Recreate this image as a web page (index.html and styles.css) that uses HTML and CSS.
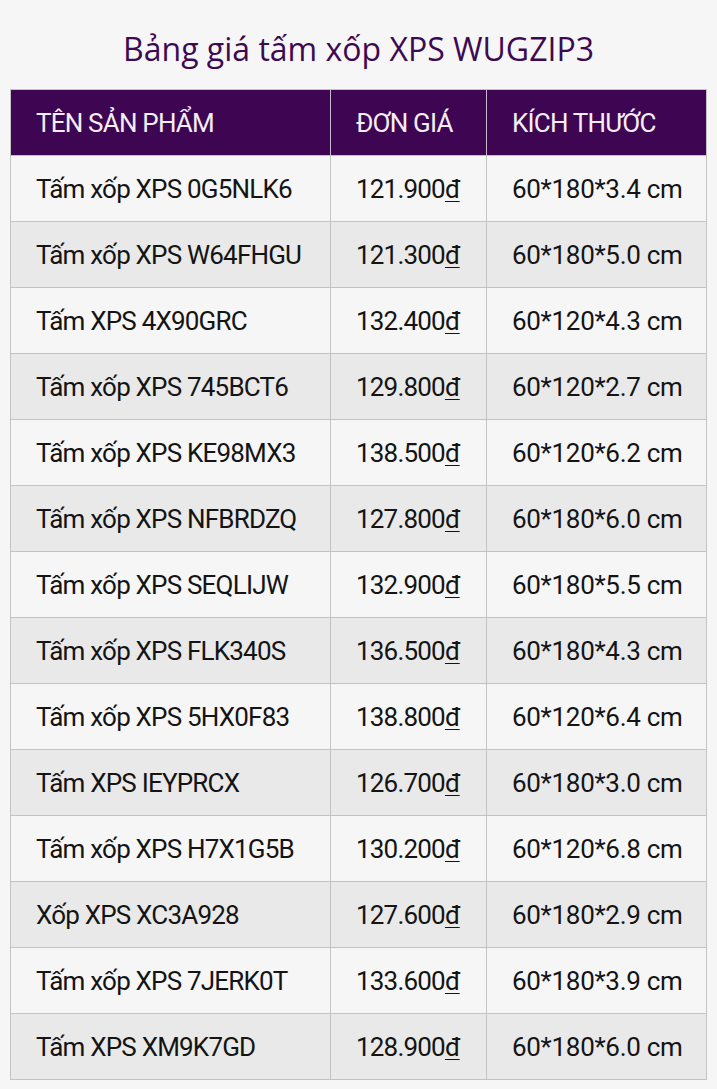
FILE: index.html
```html
<!DOCTYPE html>
<html lang="vi">
<head>
<meta charset="utf-8">
<title>Bảng giá tấm xốp XPS WUGZIP3</title>
<link rel="stylesheet" href="styles.css">
</head>
<body>
<div class="page">
  <h1 class="title">Bảng giá tấm xốp XPS WUGZIP3</h1>
  <table class="price-table">
    <thead>
      <tr><th class="c1">TÊN SẢN PHẨM</th><th class="c2">ĐƠN GIÁ</th><th class="c3">KÍCH THƯỚC</th></tr>
    </thead>
    <tbody>
      <tr><td>Tấm xốp XPS 0G5NLK6</td><td>121.900<u>đ</u></td><td>60*180*3.4 cm</td></tr>
      <tr><td>Tấm xốp XPS W64FHGU</td><td>121.300<u>đ</u></td><td>60*180*5.0 cm</td></tr>
      <tr><td>Tấm XPS 4X90GRC</td><td>132.400<u>đ</u></td><td>60*120*4.3 cm</td></tr>
      <tr><td>Tấm xốp XPS 745BCT6</td><td>129.800<u>đ</u></td><td>60*120*2.7 cm</td></tr>
      <tr><td>Tấm xốp XPS KE98MX3</td><td>138.500<u>đ</u></td><td>60*120*6.2 cm</td></tr>
      <tr><td>Tấm xốp XPS NFBRDZQ</td><td>127.800<u>đ</u></td><td>60*180*6.0 cm</td></tr>
      <tr><td>Tấm xốp XPS SEQLIJW</td><td>132.900<u>đ</u></td><td>60*180*5.5 cm</td></tr>
      <tr><td>Tấm xốp XPS FLK340S</td><td>136.500<u>đ</u></td><td>60*180*4.3 cm</td></tr>
      <tr><td>Tấm xốp XPS 5HX0F83</td><td>138.800<u>đ</u></td><td>60*120*6.4 cm</td></tr>
      <tr><td>Tấm XPS IEYPRCX</td><td>126.700<u>đ</u></td><td>60*180*3.0 cm</td></tr>
      <tr><td>Tấm xốp XPS H7X1G5B</td><td>130.200<u>đ</u></td><td>60*120*6.8 cm</td></tr>
      <tr><td>Xốp XPS XC3A928</td><td>127.600<u>đ</u></td><td>60*180*2.9 cm</td></tr>
      <tr><td>Tấm xốp XPS 7JERK0T</td><td>133.600<u>đ</u></td><td>60*180*3.9 cm</td></tr>
      <tr><td>Tấm XPS XM9K7GD</td><td>128.900<u>đ</u></td><td>60*180*6.0 cm</td></tr>
    </tbody>
  </table>
</div>
</body>
</html>
```
FILE: styles.css
```css
html, body {
  margin: 0;
  padding: 0;
  background: #f6f6f6;
}
body {
  font-family: Roboto, "Open Sans", sans-serif;
  color: #141414;
}
.page {
  padding: 0 10px;
}
.title {
  margin: 0;
  height: 89px;
  line-height: 98px;
  box-sizing: border-box;
  text-align: center;
  font-family: "Open Sans", Roboto, sans-serif;
  font-weight: normal;
  font-size: 32px;
  color: #3d0a52;
}
.price-table {
  width: 697px;
  border-collapse: collapse;
  table-layout: fixed;
  font-size: 26px;
  letter-spacing: -0.8px;
}
.price-table th,
.price-table td {
  box-sizing: border-box;
  height: 66px;
  padding: 0 0 0 25px;
  text-align: left;
  font-weight: normal;
  border: 1px solid #c3c3c3;
  white-space: nowrap;
  overflow: hidden;
}
.price-table th {
  background: #3e0552;
  color: #f2eef4;
  border-color: #c9b9cf;
  border-top-color: #c3c3c3;
}
.price-table th:first-child { border-left-color: #c3c3c3; }
.price-table th:last-child { border-right-color: #c3c3c3; }
.c1 { width: 320px; }
.c2 { width: 156px; }
.c3-text { letter-spacing: -0.4px; }
.price-table tbody td:nth-child(3) { letter-spacing: -0.3px; }
.price-table tbody tr:nth-child(odd) td { background: #f6f6f6; }
.price-table tbody tr:nth-child(even) td { background: #e9e9e9; }
.price-table u { text-decoration-thickness: 1px; text-underline-offset: 3px; }
```
